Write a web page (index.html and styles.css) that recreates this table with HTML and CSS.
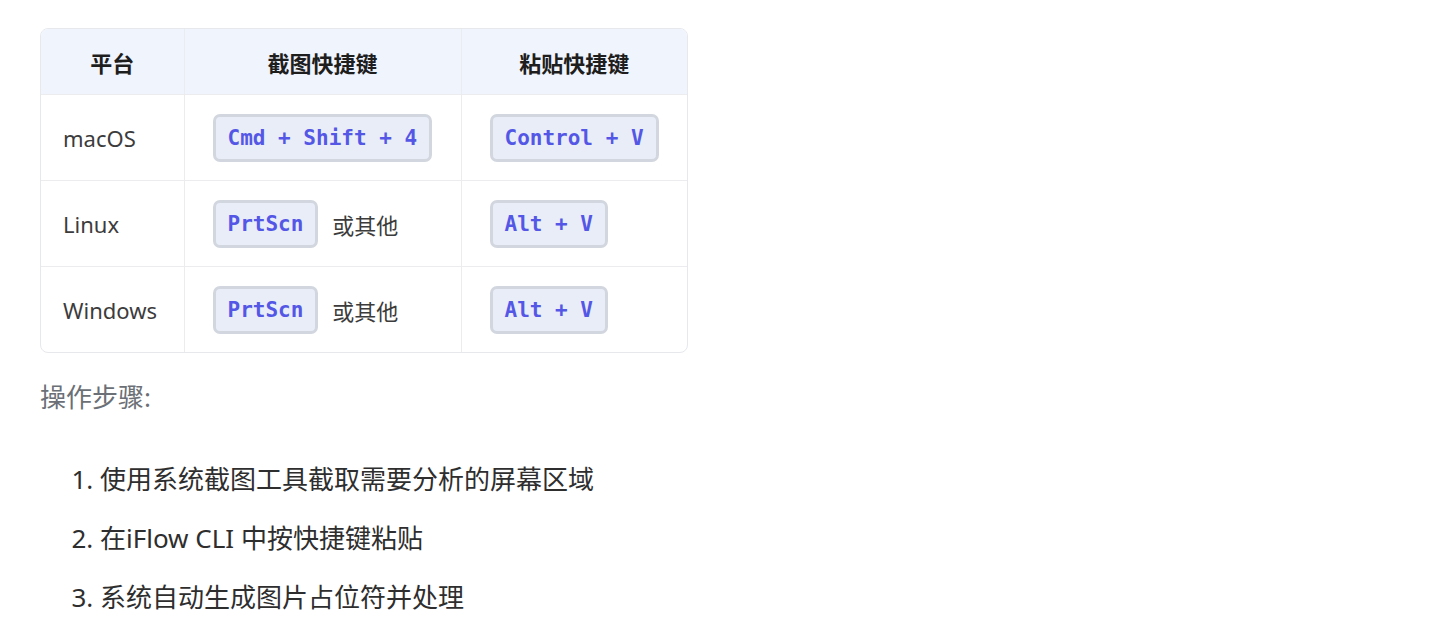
FILE: index.html
```html
<!DOCTYPE html>
<html lang="zh-CN">
<head>
<meta charset="utf-8">
<title>截图粘贴</title>
<link rel="stylesheet" href="styles.css">
</head>
<body>
<main class="doc">
  <div class="table-wrap">
    <table class="keys">
      <colgroup>
        <col class="c1"><col class="c2"><col class="c3">
      </colgroup>
      <thead>
        <tr><th>平台</th><th>截图快捷键</th><th>粘贴快捷键</th></tr>
      </thead>
      <tbody>
        <tr>
          <td>macOS</td>
          <td><div class="cell"><kbd>Cmd + Shift + 4</kbd></div></td>
          <td><div class="cell"><kbd>Control + V</kbd></div></td>
        </tr>
        <tr>
          <td>Linux</td>
          <td><div class="cell"><kbd>PrtScn</kbd><span>或其他</span></div></td>
          <td><div class="cell"><kbd>Alt + V</kbd></div></td>
        </tr>
        <tr>
          <td>Windows</td>
          <td><div class="cell"><kbd>PrtScn</kbd><span>或其他</span></div></td>
          <td><div class="cell"><kbd>Alt + V</kbd></div></td>
        </tr>
      </tbody>
    </table>
  </div>
  <p class="lead">操作步骤:</p>
  <ol class="steps">
    <li>使用系统截图工具截取需要分析的屏幕区域</li>
    <li>在iFlow CLI 中按快捷键粘贴</li>
    <li>系统自动生成图片占位符并处理</li>
  </ol>
</main>
</body>
</html>
```

FILE: styles.css
```css
html, body {
  margin: 0;
  padding: 0;
  background: #ffffff;
}

body {
  font-family: "Noto Sans", "Noto Sans CJK SC", sans-serif;
  color: #333333;
}

.doc {
  padding: 28px 0 0 40px;
}

.table-wrap {
  width: 648px;
  border: 1px solid #e6e8ec;
  border-radius: 8px;
  overflow: hidden;
  box-sizing: border-box;
}

.keys {
  width: 100%;
  border-collapse: collapse;
  font-size: 22px;
}

.keys .c1 { width: 143px; }
.keys .c2 { width: 277px; }
.keys .c3 { width: 226px; }

.keys th {
  height: 65px;
  background: #f0f4fd;
  color: #1e1e1e;
  font-weight: 700;
  text-align: center;
  border-bottom: 1px solid #ececee;
  border-left: 1px solid #ececee;
  padding: 0;
}

.keys td {
  height: 85px;
  padding: 0 0 0 22px;
  color: #3c3c3c;
  border-top: 1px solid #ececee;
  border-left: 1px solid #ececee;
  vertical-align: middle;
}

.keys th:first-child,
.keys td:first-child {
  border-left: none;
}

.keys tbody tr:first-child td {
  border-top: none;
}

.cell {
  display: flex;
  align-items: center;
  gap: 14px;
  padding-left: 6px;
}

kbd {
  display: inline-block;
  font-family: "DejaVu Sans Mono", monospace;
  font-weight: 700;
  font-size: 21px;
  line-height: 30px;
  padding: 6px 12px;
  color: #5457e6;
  background: #e8edf8;
  border: 3px solid #d2d6de;
  border-radius: 7px;
  white-space: nowrap;
}

.lead {
  margin: 26px 0 0 0;
  font-size: 26px;
  line-height: 36px;
  color: #6b6f76;
}

.steps {
  margin: 46px 0 0 0;
  padding-left: 60px;
  font-size: 26px;
  line-height: 36px;
  color: #2e2e2e;
}

.steps li {
  margin-bottom: 23px;
}
```
